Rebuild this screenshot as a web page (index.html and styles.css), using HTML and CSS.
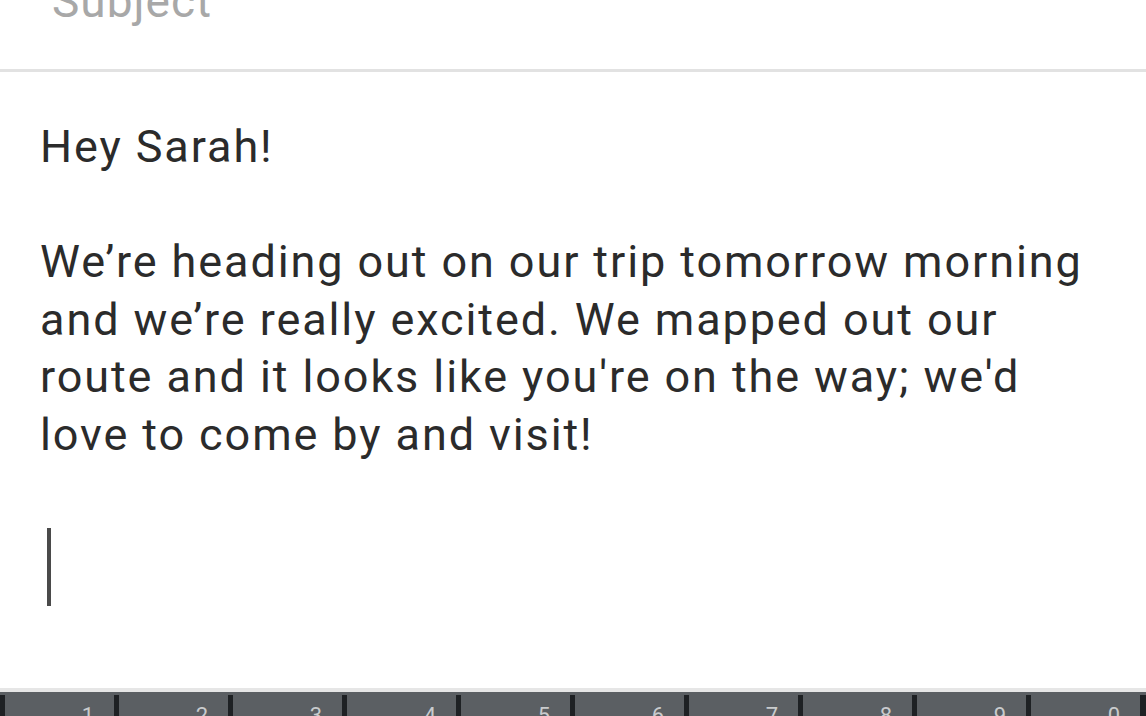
FILE: index.html
```html
<!DOCTYPE html>
<html>
<head>
<meta charset="utf-8">
<link rel="stylesheet" href="styles.css">
</head>
<body>
<div class="screen">
  <div class="subject-field">
    <div class="subject">Subject</div>
  </div>
  <div class="divider"></div>
  <div class="body">
    <div class="line">Hey Sarah!</div>
    <div class="line blank">&nbsp;</div>
    <div class="line">We’re heading out on our trip tomorrow morning</div>
    <div class="line">and we’re really excited. We mapped out our</div>
    <div class="line">route and it looks like you're on the way; we'd</div>
    <div class="line">love to come by and visit!</div>
    <div class="cursor"></div>
  </div>
  <div class="keyboard">
    <div class="keys">
      <div class="key">1</div>
      <div class="key">2</div>
      <div class="key">3</div>
      <div class="key">4</div>
      <div class="key">5</div>
      <div class="key">6</div>
      <div class="key">7</div>
      <div class="key">8</div>
      <div class="key">9</div>
      <div class="key last">0</div>
    </div>
  </div>
</div>
</body>
</html>
```
FILE: styles.css
```css
html, body {
  margin: 0;
  padding: 0;
  background: #ffffff;
  overflow: hidden;
}
.screen {
  width: 1146px;
  height: 716px;
  display: flex;
  flex-direction: column;
  font-family: Roboto, "Noto Sans", sans-serif;
  overflow: hidden;
}
.subject-field {
  height: 69px;
  padding-left: 52px;
  box-sizing: border-box;
}
.subject {
  margin-top: -27px;
  font-size: 46px;
  line-height: 57.5px;
  letter-spacing: 1px;
  color: #a8a8a8;
}
.divider {
  height: 3px;
  background: #e2e2e2;
}
.body {
  padding-top: 46px;
  padding-left: 40px;
  color: #2b2b2b;
  font-size: 45px;
  line-height: 57.5px;
  letter-spacing: 1.9px;
}
.line {
  white-space: nowrap;
}
.cursor {
  width: 4px;
  height: 78px;
  margin-top: 65px;
  margin-left: 7px;
  background: #4a4a4a;
}
.keyboard {
  margin-top: auto;
  height: 28px;
  border-top: 4px solid #e6e6e6;
  background: #5b5f63;
  box-sizing: border-box;
  padding-top: 3px;
}
.keys {
  display: flex;
  height: 100%;
}
.key {
  flex: 1;
  border-left: 5px solid #1e2124;
  text-align: right;
  padding-right: 20px;
  padding-top: 10px;
  font-size: 22px;
  line-height: 22px;
  color: #c9cbcd;
}
.key.last {
  border-right: 6px solid #1e2124;
}
```
